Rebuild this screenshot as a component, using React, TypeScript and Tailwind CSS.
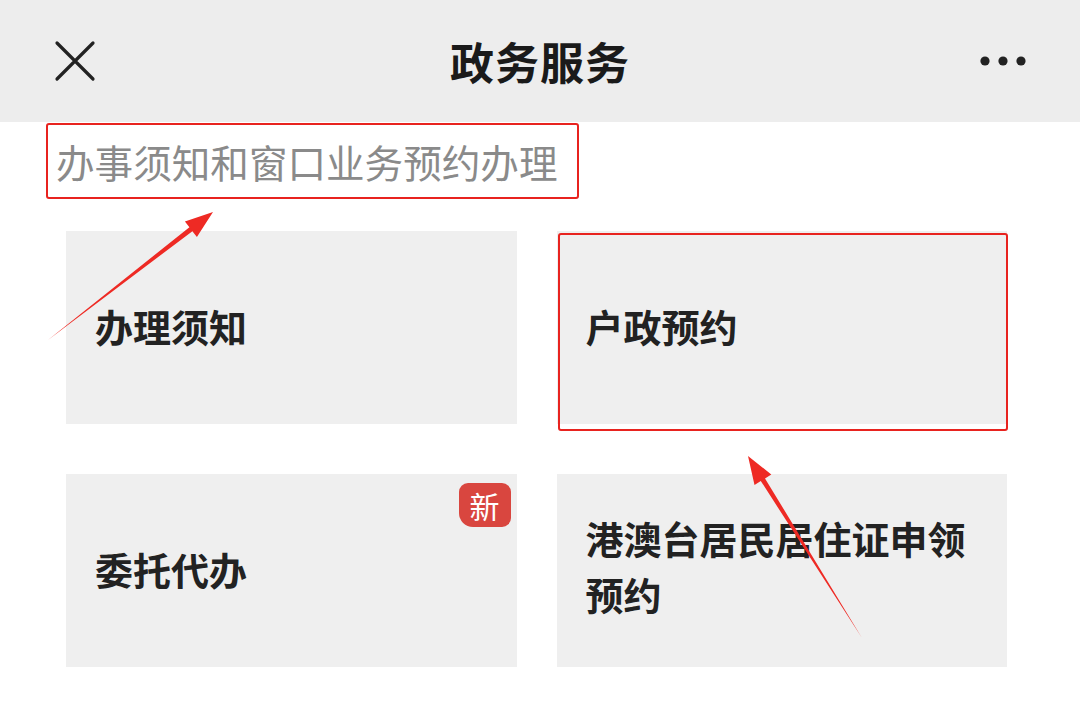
import React from "react";

const font = { fontFamily: '"Noto Sans CJK SC", "Noto Sans", sans-serif' };

function Card({
  children,
  badge,
  marked,
}: {
  children: React.ReactNode;
  badge?: boolean;
  marked?: boolean;
}) {
  return (
    <div className="relative flex h-[193px] items-center bg-[#efefef] pl-[29px] pr-[30px]">
      <div className="-mt-[3px] text-[38px] font-bold leading-[56px] text-[#222]">{children}</div>
      {badge && (
        <div className="absolute right-[6px] top-[9px] flex h-[44px] w-[52px] items-center justify-center rounded-[9px] rounded-bl-[14px] bg-[#d9463f] text-[30px] leading-none text-white">
          新
        </div>
      )}
      {marked && (
        <div className="pointer-events-none absolute -bottom-[7px] -right-px left-px top-[2px] rounded-[3px] border-2 border-[#e8231f]" />
      )}
    </div>
  );
}

export default function App() {
  return (
    <div className="relative h-[706px] w-[1080px] overflow-hidden bg-white" style={font}>
      <div className="grid h-[122px] grid-cols-[1fr_auto_1fr] items-center bg-[#ededed] px-[55px]">
        <svg width="42" height="42" viewBox="0 0 42 42" className="-ml-px">
          <path d="M3 3 L39 39 M39 3 L3 39" stroke="#222" strokeWidth="3.2" strokeLinecap="round" />
        </svg>
        <div className="text-[44px] font-bold tracking-[1px] text-[#1a1a1a]">政务服务</div>
        <svg width="48" height="12" viewBox="0 0 48 12" className="mr-[-2px] justify-self-end">
          <circle cx="6" cy="6" r="4.6" fill="#222" />
          <circle cx="24" cy="6" r="4.6" fill="#222" />
          <circle cx="42" cy="6" r="4.6" fill="#222" />
        </svg>
      </div>

      <div className="ml-[46px] mt-px flex h-[76px] w-[533px] items-center rounded-[3px] border-2 border-[#e8231f] pl-[8px]">
        <span className="text-[38.6px] leading-none text-[#8a8a8a]">办事须知和窗口业务预约办理</span>
      </div>

      <div className="ml-[66px] mt-[32px] grid w-[941px] grid-cols-2 gap-x-[40px] gap-y-[50px]">
        <Card>办理须知</Card>
        <Card marked>户政预约</Card>
        <Card badge>委托代办</Card>
        <Card>
          <div className="-mt-[6px]">
            港澳台居民居住证申领
            <br />
            预约
          </div>
        </Card>
      </div>

      <svg className="pointer-events-none absolute left-0 top-0" width="1080" height="706">
        <polygon
          points="48,340 192.4,231.2 196.9,237 213,212 184.9,221.5 189.4,227.2"
          fill="#ee2a24"
        />
        <polygon
          points="862,638 765,478.4 771.3,474.4 748,456 754.5,485 760.8,481"
          fill="#ee2a24"
        />
      </svg>
    </div>
  );
}
